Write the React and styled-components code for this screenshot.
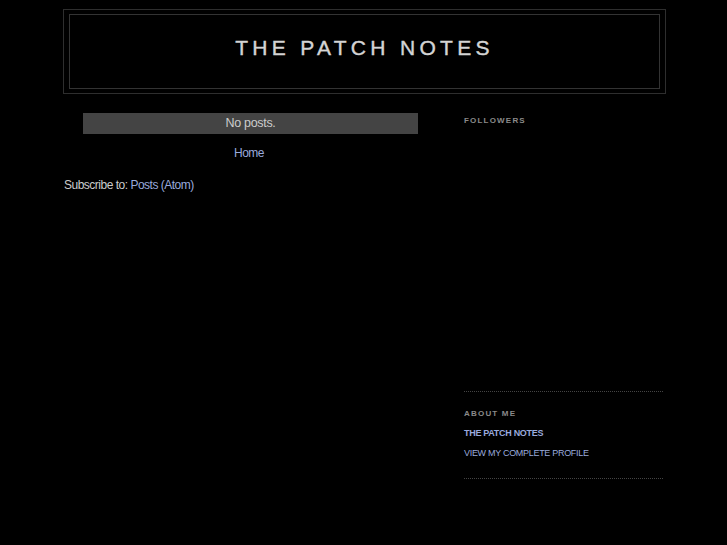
import React from "react";
import styled, { createGlobalStyle } from "styled-components";

const Global = createGlobalStyle`
  html, body { margin: 0; padding: 0; background: #000; }
  body {
    color: #ccc;
    font-family: "Liberation Sans", Arial, sans-serif;
    font-size: 12px;
  }
  a { color: #99aadd; text-decoration: none; }
`;

const Wrapper = styled.div`
  width: 603px;
  margin: 9px 0 0 63px;
`;

const HeaderOuter = styled.div`
  border: 1px solid #2e2e2e;
  box-sizing: border-box;
  height: 85px;
  padding: 4px 5px;
`;

const HeaderInner = styled.div`
  border: 1px solid #333;
  height: 100%;
  box-sizing: border-box;
  display: flex;
  align-items: center;
  justify-content: center;
`;

const Title = styled.h1`
  margin: 0 0 8px 0;
  font-family: "Liberation Sans", Arial, sans-serif;
  font-weight: normal;
  font-size: 21px;
  letter-spacing: 4.3px;
  color: #d4d4d4;
  text-transform: uppercase;
  -webkit-text-stroke: 0.4px #d4d4d4;
`;

const Columns = styled.div`
  display: flex;
  justify-content: space-between;
  align-items: flex-start;
`;

const Main = styled.div`
  width: 373px;
  margin-left: 1px;
  padding-top: 19px;
`;

const StatusMsg = styled.div`
  width: 335px;
  margin-left: 19px;
  height: 21px;
  line-height: 21px;
  background: #444;
  text-align: center;
  color: #ccc;
  font-size: 12.5px;
  letter-spacing: -0.3px;
`;

const Pager = styled.div`
  margin-top: 11px;
  padding-right: 3px;
  text-align: center;
  line-height: 16px;
  letter-spacing: -0.5px;
`;

const Feed = styled.div`
  margin-top: 16px;
  line-height: 16px;
  letter-spacing: -0.5px;
  color: #ccc;
`;

const Sidebar = styled.div`
  width: 199px;
  margin-right: 3px;
  padding-top: 22px;
`;

const Widget = styled.div`
  border-bottom: 1px dotted #444;
  height: ${(p) => p.$h}px;
  box-sizing: border-box;
  margin-bottom: ${(p) => p.$mb || 0}px;
`;

const WidgetTitle = styled.h2`
  margin: 0;
  font-size: 8px;
  line-height: 10px;
  font-weight: bold;
  letter-spacing: 1.2px;
  color: #8a8a8a;
  text-transform: uppercase;
`;

const ProfileName = styled.a`
  display: block;
  margin-top: 9px;
  font-size: 9px;
  line-height: 11px;
  font-weight: bold;
  letter-spacing: -0.3px;
  text-transform: uppercase;
`;

const ProfileLink = styled.a`
  display: block;
  margin-top: 9px;
  font-size: 9px;
  line-height: 11px;
  letter-spacing: -0.3px;
  text-transform: uppercase;
`;

export default function App() {
  return (
    <>
      <Global />
      <Wrapper>
        <HeaderOuter>
          <HeaderInner>
            <Title>The Patch Notes</Title>
          </HeaderInner>
        </HeaderOuter>
        <Columns>
          <Main>
            <StatusMsg>No posts.</StatusMsg>
            <Pager>
              <a href="#">Home</a>
            </Pager>
            <Feed>
              Subscribe to: <a href="#">Posts (Atom)</a>
            </Feed>
          </Main>
          <Sidebar>
            <Widget $h={276} $mb={17}>
              <WidgetTitle>Followers</WidgetTitle>
            </Widget>
            <Widget $h={70}>
              <WidgetTitle>About Me</WidgetTitle>
              <ProfileName href="#">The Patch Notes</ProfileName>
              <ProfileLink href="#">View my complete profile</ProfileLink>
            </Widget>
          </Sidebar>
        </Columns>
      </Wrapper>
    </>
  );
}
